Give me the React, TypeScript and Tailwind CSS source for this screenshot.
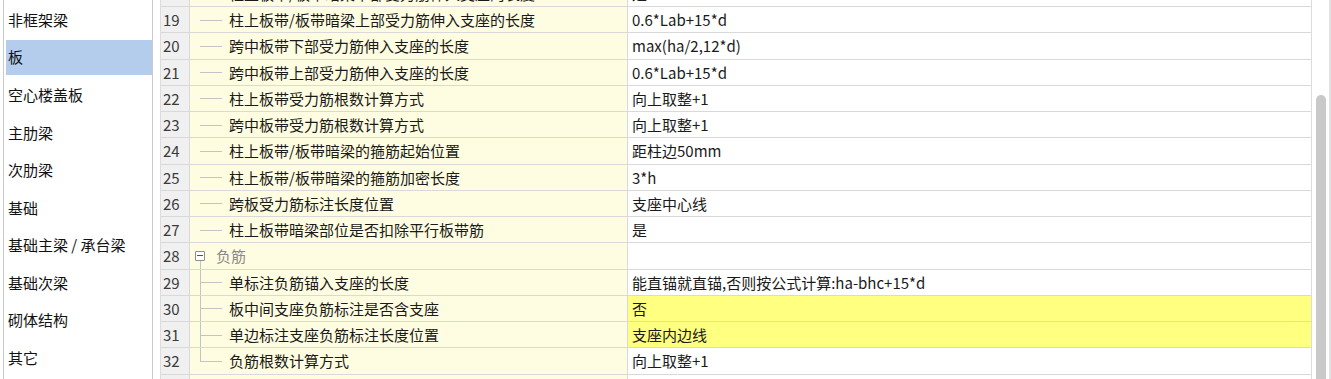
import React from "react";

type Row = {
  n: number;
  name: string;
  value?: string;
  kind: "child" | "group" | "groupChild" | "groupLast" | "blank";
  hl?: boolean;
};

const categories = [
  "非框架梁",
  "板",
  "空心楼盖板",
  "主肋梁",
  "次肋梁",
  "基础",
  "基础主梁 / 承台梁",
  "基础次梁",
  "砌体结构",
  "其它",
];

const rows: Row[] = [
  { n: 18, name: "柱上板带/板带暗梁下部受力筋伸入支座的长度", value: "是", kind: "child" },
  { n: 19, name: "柱上板带/板带暗梁上部受力筋伸入支座的长度", value: "0.6*Lab+15*d", kind: "child" },
  { n: 20, name: "跨中板带下部受力筋伸入支座的长度", value: "max(ha/2,12*d)", kind: "child" },
  { n: 21, name: "跨中板带上部受力筋伸入支座的长度", value: "0.6*Lab+15*d", kind: "child" },
  { n: 22, name: "柱上板带受力筋根数计算方式", value: "向上取整+1", kind: "child" },
  { n: 23, name: "跨中板带受力筋根数计算方式", value: "向上取整+1", kind: "child" },
  { n: 24, name: "柱上板带/板带暗梁的箍筋起始位置", value: "距柱边50mm", kind: "child" },
  { n: 25, name: "柱上板带/板带暗梁的箍筋加密长度", value: "3*h", kind: "child" },
  { n: 26, name: "跨板受力筋标注长度位置", value: "支座中心线", kind: "child" },
  { n: 27, name: "柱上板带暗梁部位是否扣除平行板带筋", value: "是", kind: "child" },
  { n: 28, name: "负筋", kind: "group" },
  { n: 29, name: "单标注负筋锚入支座的长度", value: "能直锚就直锚,否则按公式计算:ha-bhc+15*d", kind: "groupChild" },
  { n: 30, name: "板中间支座负筋标注是否含支座", value: "否", kind: "groupChild", hl: true },
  { n: 31, name: "单边标注支座负筋标注长度位置", value: "支座内边线", kind: "groupChild", hl: true },
  { n: 32, name: "负筋根数计算方式", value: "向上取整+1", kind: "groupLast" },
  { n: 33, name: "", kind: "blank" },
];

function TreeIndent({ kind }: { kind: Row["kind"] }) {
  if (kind === "group") {
    return (
      <div className="relative flex h-full w-[26px] shrink-0 items-center">
        <div className="ml-[5px] flex h-[10px] w-[10px] items-center justify-center rounded-[1px] border border-[#8c8c8c] bg-white">
          <div className="h-px w-[6px] bg-[#555]" />
        </div>
        <div className="absolute top-[calc(50%+5px)] bottom-0 left-[10px] w-px bg-[#c4c4c4]" />
      </div>
    );
  }
  return (
    <div className="relative h-full w-[39px] shrink-0">
      {kind === "groupChild" && (
        <div className="absolute top-0 bottom-0 left-[10px] w-px bg-[#c4c4c4]" />
      )}
      {kind === "groupLast" && (
        <div className="absolute top-0 bottom-1/2 left-[10px] w-px bg-[#c4c4c4]" />
      )}
      {kind !== "blank" && (
        <div className="absolute top-1/2 left-[10px] h-px w-[22px] bg-[#c4c4c4]" />
      )}
    </div>
  );
}

function TableRow({ row }: { row: Row }) {
  return (
    <div className="flex h-[26.25px] border-b border-[#d9d9d9] text-[15px] leading-none">
      <div className="flex w-[29px] shrink-0 items-center border-r border-[#d9d9d9] bg-[#f0f0f0] pl-[2px] text-[#3a3a3a]">
        {row.n}
      </div>
      <div className="flex w-[438px] shrink-0 items-center border-r border-[#d9d9d9] bg-[#fffde1]">
        <TreeIndent kind={row.kind} />
        <span className={row.kind === "group" ? "text-[#8a8a8a]" : "text-[#1a1a1a]"}>
          {row.name}
        </span>
      </div>
      <div
        className={`flex flex-1 items-center pl-[4px] text-[#1a1a1a] ${
          row.hl ? "bg-[#ffff80]" : "bg-white"
        }`}
      >
        {row.value}
      </div>
    </div>
  );
}

export default function App() {
  return (
    <div className="flex h-[379px] w-[1331px] overflow-hidden bg-white font-['Noto_Sans_CJK_SC','Microsoft_YaHei',sans-serif]">
      <div className="ml-[3px] h-full w-[150px] shrink-0 border-x border-[#cacaca] pt-[1.2px]">
        {categories.map((c, i) => (
          <div key={c} className="flex h-[37.6px] items-center pl-[2px]">
            <div
              className={`flex h-[35px] w-full items-center pl-[2px] text-[15px] text-[#111] ${
                i === 1 ? "bg-[#b4cdec]" : ""
              }`}
            >
              {c}
            </div>
          </div>
        ))}
      </div>

      <div className="ml-[7px] h-full w-[1152px] shrink-0 overflow-hidden border-x border-[#dcdcdc]">
        <div className="-mt-[19.25px]">
          {rows.map((r) => (
            <TableRow key={r.n} row={r} />
          ))}
        </div>
      </div>

      <div className="flex h-full flex-1">
        <div className="ml-[4px] w-[10px] pt-[95px]">
          <div className="h-full w-full rounded-t-full bg-[#c9c9c9]" />
        </div>
        <div className="ml-auto h-full w-[2px] bg-[#e2e2e2]" />
      </div>
    </div>
  );
}
